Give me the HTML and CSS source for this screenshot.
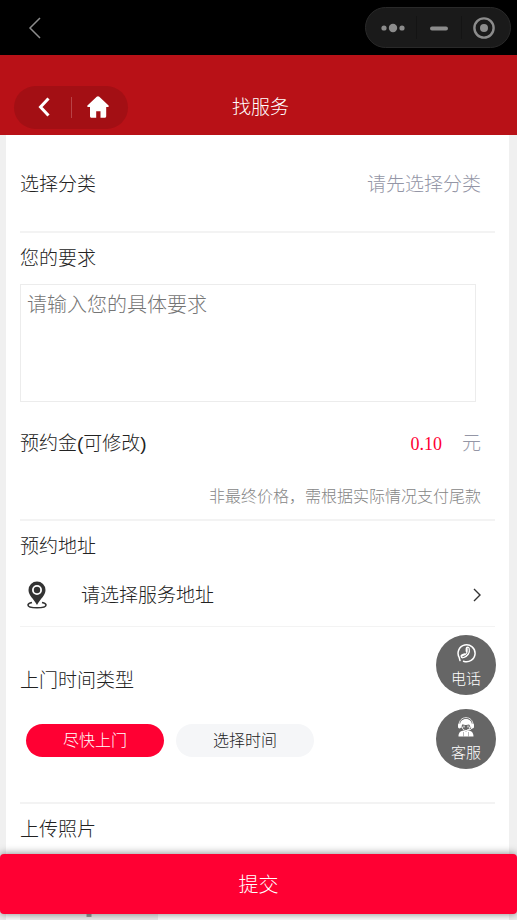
FILE: index.html
```html
<!DOCTYPE html>
<html lang="zh-CN">
<head>
<meta charset="utf-8">
<meta name="viewport" content="width=device-width, initial-scale=1">
<title>找服务</title>
<link rel="stylesheet" href="styles.css">
</head>
<body>
<div class="app">
  <div class="topbar">
    <button class="icon-button" type="button" aria-label="返回">
      <svg width="14" height="22" viewBox="0 0 14 22"><path d="M12 1 2 11l10 10" fill="none" stroke="#8c8c8c" stroke-width="1.5"/></svg>
    </button>
    <div class="capsule">
      <button type="button" aria-label="更多"><svg width="24" height="22" viewBox="0 0 24 22" fill="#8c8c8c"><circle cx="3" cy="11" r="2.6"/><circle cx="12" cy="11" r="4.2"/><circle cx="21" cy="11" r="2.6"/></svg></button>
      <button type="button" aria-label="最小化"><svg width="18" height="22" viewBox="0 0 18 22"><rect y="9.5" width="18" height="4" rx="2" fill="#8c8c8c"/></svg></button>
      <button type="button" aria-label="关闭"><svg width="22" height="22" viewBox="0 0 22 22"><circle cx="11" cy="11" r="9.6" fill="none" stroke="#8c8c8c" stroke-width="2.4"/><circle cx="11" cy="11" r="4" fill="#8c8c8c"/></svg></button>
    </div>
  </div>

  <header class="header">
    <nav class="nav">
      <button type="button" aria-label="后退"><svg width="12" height="20" viewBox="0 0 12 20"><path d="M10.500 1.500 2.500 10l8 8.500" fill="none" stroke="#fff" stroke-width="3"/></svg></button>
      <button type="button" aria-label="首页"><svg width="22" height="22" viewBox="0 0 22 22"><path d="M11 0.2c.5 0 .9.2 1.3.6l9 8.500c1 1 .5 1.700-.5 1.700H19.200v9.200c0 .9-.6 1.500-1.500 1.500h-4.200v-6.500H9.200v6.500H4.500c-.9 0-1.500-.6-1.500-1.500V11H1.200c-1 0-1.500-.8-.5-1.700l9-8.500c.4-.4.8-.6 1.300-.6z" fill="#fff"/></svg></button>
    </nav>
    <h1>找服务</h1>
  </header>

  <main class="content">
    <form class="panel" id="service-form">
      <section class="group category">
        <span class="label" id="category-label">选择分类</span>
        <button class="category-value" type="button" aria-describedby="category-label">请先选择分类</button>
      </section>

      <section class="group request">
        <label class="label" for="request">您的要求</label>
        <textarea id="request" placeholder="请输入您的具体要求"></textarea>
        <div class="deposit">
          <label class="label" for="deposit">预约金<b>(</b>可修改<b>)</b></label>
          <input id="deposit" type="text" inputmode="decimal" value="0.10">
          <span class="unit">元</span>
        </div>
        <p class="hint">非最终价格，需根据实际情况支付尾款</p>
      </section>

      <section class="group address">
        <span class="label">预约地址</span>
        <button class="address-picker" type="button">
          <svg width="20" height="28" viewBox="0 0 20 28"><path d="M5 21.500C2.500 22 1 22.900 1 24c0 1.700 4 2.800 9 2.800s9-1.100 9-2.800c0-1.100-1.500-2-4-2.500" fill="none" stroke="#333" stroke-width="1.600"/><path fill="#333" fill-rule="evenodd" d="M10 .5a8.500 8.500 0 0 0-8.500 8.500c0 5.500 5 8.500 8.500 15 3.500-6.500 8.500-9.500 8.500-15A8.500 8.500 0 0 0 10 .5zM10 4a5 5 0 1 1 0 10A5 5 0 0 1 10 4z"/><circle cx="10" cy="9" r="3.200" fill="#333"/></svg>
          <span>请选择服务地址</span>
          <svg width="8" height="14" viewBox="0 0 8 14"><path d="m1 1 6 6-6 6" fill="none" stroke="#333" stroke-width="1.400"/></svg>
        </button>
      </section>

      <section class="group time">
        <span class="label">上门时间类型</span>
        <div class="options">
          <button class="option selected" type="button" aria-pressed="true">尽快上门</button>
          <button class="option" type="button" aria-pressed="false">选择时间</button>
        </div>
      </section>

      <section class="group photos">
        <span class="label">上传照片</span>
        <button class="upload" type="button" aria-label="添加照片"><svg width="40" height="40" viewBox="0 0 40 40"><path d="M20 0v40M0 20h40" stroke="#999" stroke-width="5"/></svg></button>
      </section>
    </form>
  </main>

  <aside class="contacts">
    <a href="#phone">
      <svg width="20" height="20" viewBox="0 0 20 20" fill="none" stroke="#fff" stroke-linecap="round"><path d="M4 17.500 3.200 14.500A8.500 8.500 0 1 1 7.500 18.200" stroke-width="1.500"/><path d="M12 5.800C13.300 9.500 11 13 6.800 13.800" stroke-width="3"/><path d="M11.600 5.500v2.500M6.500 13.200l2-.8" stroke-width="4"/><path d="M12.100 5.500C13 9.500 11 12.600 6.800 13.600" stroke="#666" stroke-width="1"/></svg>
      <span>电话</span>
    </a>
    <a href="#support">
      <svg width="20" height="20" viewBox="0 0 20 20"><path d="M3 8C3 3.500 6 .6 10 .6S17 3.500 17 8" fill="none" stroke="#ddd"/><path d="M4 10C3.500 4 6.500 2 10 2s6.500 2 6 8l-1.500 1c0-1.500-.5-2.500-1.500-3.500-2 .8-5 .5-6.500-.2C5.800 8 5.500 9.500 5.500 11z" fill="#fff"/><rect x="2" y="6.500" width="3" height="5" rx="1.400" fill="#fff"/><rect x="15" y="6.500" width="3" height="5" rx="1.400" fill="#fff"/><path d="M6 9.500c.5 3 2 4 4 4s3.500-1 4-4M16 11c-1 1.500-2.500 2-5 2" fill="none" stroke="#fff"/><path d="M8 8.500v2M12 8.500v2" stroke="#fff"/><path d="M2.500 19.500c0-4 2-5.700 5.500-6l2 1 2-1c3.500.3 5.500 2 5.500 6z" fill="#fff"/><path d="M7.500 15v4.500M12.500 15v4.500" stroke="#888" stroke-width=".6"/></svg>
      <span>客服</span>
    </a>
  </aside>

  <footer class="footer">
    <button class="submit" type="submit" form="service-form">提交</button>
  </footer>
</div>
</body>
</html>
```
FILE: styles.css
```css
* {
  box-sizing: border-box;
}

body {
  margin: 0;
  color: #222;
  background: #fff;
  font-family: "Liberation Sans", "Noto Sans CJK SC", sans-serif;
  font-size: 19px;
  font-weight: 300;
  line-height: 28px;
}

button,
input,
textarea {
  margin: 0;
  padding: 0;
  border: 0;
  color: inherit;
  background: none;
  font: inherit;
}

svg {
  display: block;
  flex: none;
}

.app {
  position: relative;
  display: flex;
  flex-direction: column;
  height: 100vh;
  margin-right: 1px;
  overflow: hidden;
  background: #f0f0f0;
}

.topbar {
  display: flex;
  flex: none;
  align-items: center;
  justify-content: space-between;
  height: 55px;
  padding: 0 6px 0 20px;
  background: #000;
}

.icon-button {
  padding: 8px;
}

.capsule {
  display: flex;
  width: 146px;
  height: 41px;
  border: 1px solid #292929;
  border-radius: 21px;
  background: #1a1a1a;
}

.capsule button {
  display: flex;
  flex: 1;
  align-items: center;
  justify-content: center;
  margin: 8px 0;
}

.capsule button:first-child {
  flex: 0 0 50px;
  padding-left: 4px;
}

.capsule button:last-child {
  padding-right: 4px;
}

.capsule button + button {
  border-left: 1px solid #141414;
}

.header {
  display: grid;
  flex: none;
  grid-template-columns: 1fr auto 1fr;
  align-items: center;
  height: 80px;
  padding: 24px 10px 0 14px;
  color: #fff;
  background: #b81117;
}

.nav {
  display: flex;
  width: 114px;
  height: 43px;
  border-radius: 22px;
  background: #a30f14;
}

.nav button {
  display: flex;
  flex: 1;
  align-items: center;
  justify-content: center;
  margin: 11px 0;
}

.nav button:first-child {
  padding-left: 4px;
}

.nav button:last-child {
  padding-right: 4px;
  border-left: 1px solid #b94246;
}

.header h1 {
  margin: 0;
  padding-top: 2px;
  font-size: 19px;
  font-weight: 300;
}

.content {
  flex: 1;
  min-height: 0;
  padding: 0 8px 0 6px;
  overflow-y: auto;
  scrollbar-width: none;
}

.panel {
  padding: 0 14px;
  background: #fff;
}

.group {
  border-bottom: 2px solid #f3f3f3;
}

.label {
  display: block;
}

.category {
  display: flex;
  align-items: center;
  justify-content: space-between;
  height: 98px;
  padding: 4px 14px 0 0;
}

.category-value,
.unit {
  color: #9496a6;
}

.request {
  padding: 12px 14px 8px 0;
}

.request textarea {
  display: block;
  width: calc(100% - 5px);
  height: 118px;
  margin-top: 11px;
  padding: 6px;
  border: 1px solid #ececec;
  font-size: 20px;
  resize: none;
}

.request textarea::placeholder {
  color: #757575;
}

.deposit {
  display: flex;
  align-items: center;
  margin-top: 28px;
}

.deposit b {
  font-weight: 500;
}

.deposit input {
  flex: 1;
  min-width: 0;
  margin-right: 20px;
  color: #f03;
  font-family: "Liberation Serif", serif;
  font-size: 18px;
  text-align: right;
}

.hint {
  margin: 25px 0 0;
  color: #858585;
  font-size: 16px;
  text-align: right;
}

.address {
  padding-top: 12px;
  border-bottom: 1px solid #f3f3f3;
}

.address-picker {
  display: flex;
  align-items: center;
  width: 100%;
  height: 65px;
  padding: 2px 14px 0 7px;
  text-align: left;
}

.address-picker span {
  flex: 1;
  margin-left: 34px;
  padding-top: 2px;
}

.time {
  padding: 40px 0 45px;
}

.options {
  display: flex;
  gap: 12px;
  margin: 29px 6px 0;
}

.option {
  width: 138px;
  height: 33px;
  border-radius: 17px;
  background: #f5f6f8;
  font-size: 16px;
}

.option.selected {
  color: #fff;
  background: #f03;
}

.photos {
  padding: 12px 0 80px;
  border-bottom: 0;
}

.upload {
  display: flex;
  align-items: center;
  justify-content: center;
  width: 138px;
  height: 70px;
  margin-top: 18px;
  background: #eee;
}

.contacts {
  position: absolute;
  right: 21px;
  bottom: 151px;
  display: grid;
  gap: 14px;
}

.contacts a {
  display: flex;
  flex-direction: column;
  align-items: center;
  width: 60px;
  height: 60px;
  padding-top: 8px;
  border-radius: 50%;
  color: #fff;
  background: #666;
  font-size: 15px;
  line-height: 24px;
  text-decoration: none;
}

.contacts span {
  margin-top: 4px;
}

.footer {
  position: absolute;
  right: 0;
  bottom: 6px;
  left: 0;
}

.submit {
  display: block;
  width: 100%;
  height: 60px;
  padding-top: 2px;
  border-radius: 4px;
  color: #fff;
  background: #f03;
  box-shadow: 0 0 8px rgba(0, 0, 0, 0.5);
  font-size: 20px;
}
```
